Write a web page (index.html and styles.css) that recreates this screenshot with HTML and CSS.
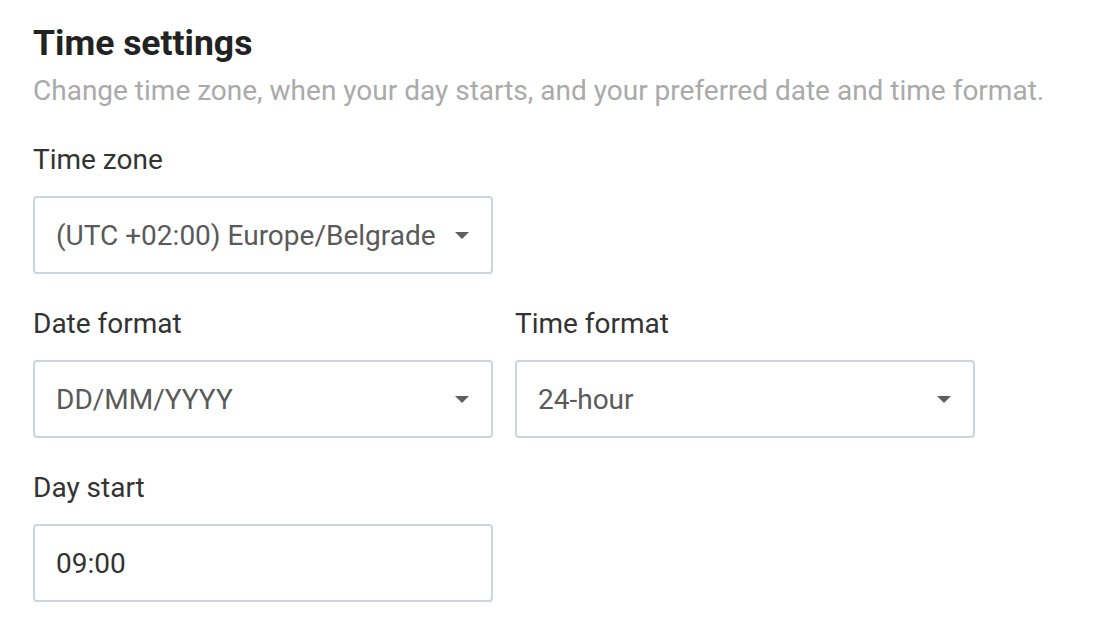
FILE: index.html
```html
<!DOCTYPE html>
<html lang="en">
<head>
<meta charset="utf-8">
<title>Time settings</title>
<link rel="stylesheet" href="styles.css">
</head>
<body>
<section class="settings">
  <h1 class="title">Time settings</h1>
  <p class="subtitle">Change time zone, when your day starts, and your preferred date and time format.</p>

  <div class="field">
    <label class="label">Time zone</label>
    <div class="select">
      <span class="value">(UTC +02:00) Europe/Belgrade</span>
      <span class="caret"></span>
    </div>
  </div>

  <div class="row">
    <div class="field">
      <label class="label">Date format</label>
      <div class="select">
        <span class="value">DD/MM/YYYY</span>
        <span class="caret"></span>
      </div>
    </div>
    <div class="field">
      <label class="label">Time format</label>
      <div class="select">
        <span class="value">24-hour</span>
        <span class="caret"></span>
      </div>
    </div>
  </div>

  <div class="field">
    <label class="label">Day start</label>
    <div class="input">
      <span class="value dark">09:00</span>
    </div>
  </div>
</section>
</body>
</html>
```

FILE: styles.css
```css
* { box-sizing: border-box; }
html, body { margin: 0; padding: 0; background: #ffffff; }
body { font-family: Roboto, "Noto Sans", Arial, sans-serif; }

.settings {
  padding: 22px 0 0 33px;
}

.title {
  margin: 0;
  font-size: 35.5px;
  line-height: 43px;
  font-weight: 700;
  color: #222222;
}

.subtitle {
  margin: 10px 0 0 0;
  font-size: 28px;
  line-height: 32px;
  color: #aaaaaa;
}

.field {
  width: 460px;
  margin-top: 34px;
}

.settings > .field:first-of-type {
  margin-top: 37px;
}

.label {
  display: block;
  font-size: 28px;
  line-height: 32px;
  color: #333333;
  margin-bottom: 20px;
}

.row {
  display: flex;
  gap: 22px;
}

.select, .input {
  height: 78px;
  border: 2px solid #cbd5de;
  border-radius: 4px;
  display: flex;
  align-items: center;
  justify-content: space-between;
  padding: 0 22px 0 21px;
}

.value {
  font-size: 28px;
  color: #5a5a5a;
}
.value.dark { color: #333333; }

.caret {
  width: 0;
  height: 0;
  border-left: 7px solid transparent;
  border-right: 7px solid transparent;
  border-top: 7px solid #5f5f5f;
  margin-top: 1px;
}
```
